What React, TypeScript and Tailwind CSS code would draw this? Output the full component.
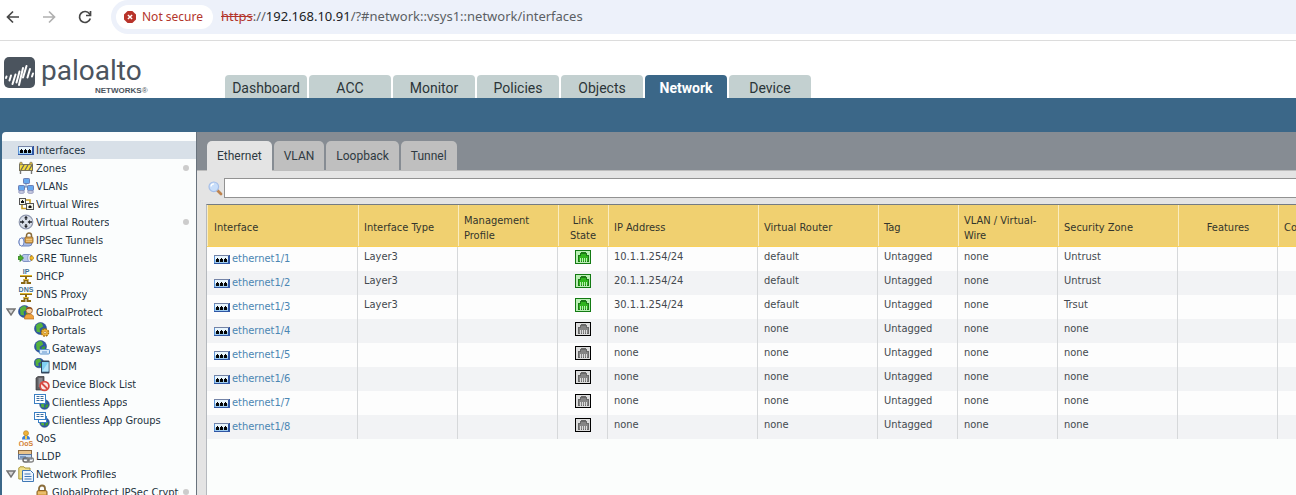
import type { ReactNode } from 'react';
import { clsx } from 'clsx';

const mainTabs = ['Dashboard', 'ACC', 'Monitor', 'Policies', 'Objects', 'Network', 'Device'];
const subTabs = ['Ethernet', 'VLAN', 'Loopback', 'Tunnel'];

interface IconProps {
  children: ReactNode;
  crisp?: boolean;
}

function Icon({ children, crisp }: IconProps) {
  return (
    <svg
      width="16"
      height="16"
      viewBox="0 0 16 16"
      className="shrink-0"
      shapeRendering={crisp ? 'crispEdges' : undefined}
      aria-hidden="true"
    >
      {children}
    </svg>
  );
}

function InterfaceIcon() {
  return (
    <Icon crisp>
      <rect x="0" y="4" width="16" height="9" fill="#2f55a3" />
      <rect x="0" y="4" width="15" height="1" fill="#7483a6" />
      <rect x="0" y="5" width="1" height="7" fill="#5c93d6" />
      <rect x="1" y="5" width="13" height="4" fill="#e8f5fd" />
      <rect x="1" y="9" width="13" height="3" fill="#9fcdf0" />
      <path d="M2 8h1V7h1v1h1v3H2zM6 8h1V7h1v1h1v3H6zM10 8h1V7h1v1h1v3h-3z" fill="#050505" />
    </Icon>
  );
}

function ZoneIcon() {
  return (
    <Icon>
      <path d="M2.5 3v11M13.5 3v11" stroke="#777" strokeWidth="1.4" />
      <rect x="1.5" y="4.5" width="13" height="6" fill="#f5dc3c" stroke="#77725c" />
      <path d="M3 10l3-5M7 10l3-5M11 10l3-5" stroke="#6f6b5c" strokeWidth="1.4" />
      <circle cx="3" cy="3.5" r="1.4" fill="#d8b63c" stroke="#777" strokeWidth=".6" />
      <circle cx="13" cy="3.5" r="1.4" fill="#d8b63c" stroke="#777" strokeWidth=".6" />
    </Icon>
  );
}

function VlanIcon() {
  return (
    <Icon>
      <path d="M8 6v3M3.5 11V9h9v2" stroke="#5d86b8" fill="none" />
      <rect x="5.5" y=".5" width="6" height="5" rx=".7" fill="#67a9ee" stroke="#6c7fb5" />
      <rect x=".5" y="7.5" width="6" height="5" rx=".7" fill="#67a9ee" stroke="#6c7fb5" />
      <rect x="9.5" y="7.5" width="6" height="5" rx=".7" fill="#67a9ee" stroke="#6c7fb5" />
      <ellipse cx="3.5" cy="14" rx="3" ry="1.5" fill="#c5c9df" stroke="#8b90b8" strokeWidth=".7" />
      <ellipse cx="12.5" cy="14" rx="3" ry="1.5" fill="#c5c9df" stroke="#8b90b8" strokeWidth=".7" />
    </Icon>
  );
}

function VirtualWireIcon() {
  return (
    <Icon>
      <path d="M4 9v3.5h5M8 4h4v3" fill="none" stroke="#c99d20" strokeWidth="1.6" />
      <rect x="1.5" y="2.5" width="6" height="6" fill="#f4f4e8" stroke="#555" />
      <rect x="8.5" y="7.5" width="7" height="6" fill="#f4f4e8" stroke="#555" />
      <path d="M3 5h1V4h1v1h1v2H3zM10.5 10h1V9h1v1h1v2h-3z" fill="#111" />
    </Icon>
  );
}

function RouterIcon() {
  return (
    <Icon>
      <circle cx="8" cy="8" r="6.8" fill="#d9dfe9" stroke="#8f98ae" strokeWidth="1.2" />
      <path
        d="M8 1.800L10 4.300H8.700V6H7.300V4.300H6zM8 14.200L6 11.700h1.300V10h1.400v1.700H10zM6.500 8L4 6v1.300H2v1.400h2V10zM9.500 8L12 6v1.300h2v1.400h-2V10z"
        fill="#22262d"
      />
    </Icon>
  );
}

function IpsecIcon() {
  return (
    <Icon>
      <rect x="1" y="6" width="13" height="8" rx="3" fill="#a9bde6" stroke="#6d83bd" />
      <ellipse cx="3.5" cy="10" rx="2.5" ry="4" fill="#f3f7ff" stroke="#7189c4" />
      <path d="M8.500 6V3.500a2.500 2.500 0 0 1 5 0V6" fill="none" stroke="#8a6d3b" strokeWidth="1.5" />
      <rect x="7" y="5" width="8" height="6" rx="1" fill="#d9a24c" stroke="#8a6127" strokeWidth=".8" />
      <path d="M8 7.500h6M8 9.300h6" stroke="#f5d18c" strokeWidth=".8" />
    </Icon>
  );
}

function GreIcon() {
  return (
    <Icon>
      <rect x="4" y="4.5" width="9" height="7" rx="2" fill="#b8c8ea" stroke="#8093c4" />
      <ellipse cx="11.5" cy="8" rx="1.8" ry="3.5" fill="#eef3ff" stroke="#7c8fc2" strokeWidth=".8" />
      <path d="M0 6.500h2V4.500L5.500 8 2 11.500v-2H0z" fill="#4fae2c" stroke="#26761a" strokeWidth=".7" />
      <path d="M12 6.500h1.500V5L16 8l-2.500 3V9.500H12z" fill="#f3bb27" stroke="#a87913" strokeWidth=".6" />
    </Icon>
  );
}

function LabelledNodeIcon({ label }: { label: string }) {
  return (
    <Icon>
      <text
        x="8"
        y="5.5"
        textAnchor="middle"
        fontSize="7"
        fontWeight="bold"
        fill="#3f6f94"
        fontFamily="Liberation Sans, sans-serif"
      >
        {label}
      </text>
      <path d="M2 8h12M8 8v3M3 15h3.500v-3h3v3H13" stroke="#8a6812" strokeWidth="2" fill="none" />
      <path d="M2 7.500h12M5.500 11.500h5" stroke="#e2b92e" strokeWidth="1" fill="none" />
    </Icon>
  );
}

function Globe({ cx = 6.5, cy = 6.5, r = 6 }: { cx?: number; cy?: number; r?: number }) {
  return (
    <g>
      <circle cx={cx} cy={cy} r={r} fill="#2e56a6" stroke="#274a86" strokeWidth=".6" />
      <path
        d={`M${cx - r * 0.75} ${cy - r * 0.5}q${r * 0.5} ${-r * 0.55} ${r} ${-r * 0.35}l${r * 0.2} ${r * 0.5}l${-r * 0.6} ${r * 0.4}l${r * 0.1} ${r * 0.6}l${-r * 0.6} ${-r * 0.1}z`}
        fill="#55b23c"
      />
      <path
        d={`M${cx + r * 0.2} ${cy + r * 0.1}l${r * 0.6} ${-r * 0.2}l${-r * 0.1} ${r * 0.6}l${-r * 0.5} ${r * 0.3}z`}
        fill="#3f9a34"
      />
    </g>
  );
}

function GlobalProtectIcon() {
  return (
    <Icon>
      <Globe cx={6.5} cy={7.5} r={6} />
      <path d="M6.500 15c0-4 2-5 4.500-5s5 1 5 5z" fill="#f0a13a" stroke="#b86a1c" strokeWidth=".7" />
      <circle cx="11.2" cy="6.5" r="3.2" fill="#f7cf9f" stroke="#9c5a22" strokeWidth=".8" />
      <path d="M8 6c0-4 6.500-4 6.500 0-1.500-1.500-4-1.800-6.500 0z" fill="#8d4c1d" />
    </Icon>
  );
}

function PortalIcon() {
  return (
    <Icon>
      <Globe />
      <circle cx="11" cy="10.5" r="3.6" fill="#f0b63c" stroke="#a86f10" strokeWidth="1.4" strokeDasharray="1.8 1" />
      <circle cx="11" cy="10.5" r="1.2" fill="#fff2c8" stroke="#a86f10" strokeWidth=".6" />
    </Icon>
  );
}

function GatewayIcon() {
  return (
    <Icon>
      <Globe />
      <rect x="5.5" y="9.5" width="10" height="4.5" rx="1" fill="#dcecfb" stroke="#5d92cb" />
      <path d="M8 12h5" stroke="#5d92cb" />
    </Icon>
  );
}

function MdmIcon() {
  return (
    <Icon>
      <Globe cx={5} cy={5} r={4.8} />
      <rect x="7" y="2.5" width="8.5" height="13" rx="1" fill="#32485f" />
      <rect x="8" y="4" width="6.5" height="9.5" fill="#7fd0f3" />
      <path d="M8 13.500L14.500 4v9.500z" fill="#b5e6fa" />
    </Icon>
  );
}

function BlockListIcon() {
  return (
    <Icon>
      <path d="M2 2l2-1.500h6V14H2z" fill="#5f5f62" stroke="#38383a" strokeWidth=".7" />
      <path d="M4.500 2h4v9h-4z" fill="#8b8b90" />
      <circle cx="10.5" cy="10" r="4.4" fill="#fbe9e7" stroke="#d84a42" strokeWidth="1.8" />
      <path d="M7.500 7l6 6" stroke="#d84a42" strokeWidth="1.8" />
    </Icon>
  );
}

function ClientlessIcon({ group }: { group?: boolean }) {
  return (
    <Icon>
      <Globe cx={10.5} cy={10.5} r={4.8} />
      {group && <rect x="4.5" y="4.5" width="8" height="6" fill="#fff" stroke="#3b80c4" />}
      <rect x=".5" y=".5" width="11" height={group ? 7 : 9} fill="#fff" stroke="#3b80c4" />
      <path d="M2.500 2.500h3M6.500 2.500h3M2.500 4.500h3M6.500 4.500h3" stroke="#3b6d9e" />
      {!group && <path d="M2.500 6.500h3M6.500 6.500h3" stroke="#3b6d9e" />}
    </Icon>
  );
}

function QosIcon() {
  return (
    <Icon>
      <path d="M4 9.500c0-3 1.500-4 4-4s4 1 4 4z" fill="#3f7fd6" />
      <circle cx="8" cy="3.2" r="2.5" fill="#efb33a" stroke="#b57a1a" strokeWidth=".6" />
      <path d="M7 6h2v3H7z" fill="#f5d04a" />
      <text
        x="8"
        y="15.5"
        textAnchor="middle"
        fontSize="7"
        fontWeight="bold"
        fill="#d38032"
        fontFamily="Liberation Sans, sans-serif"
      >
        QoS
      </text>
    </Icon>
  );
}

function LldpIcon() {
  return (
    <Icon>
      <rect x=".5" y="2.5" width="13" height="4" fill="#e9c38b" stroke="#8c6b42" />
      <rect x=".5" y="6.5" width="13" height="4.5" fill="#bcd3ee" stroke="#5c7395" />
      <path d="M2 9h6" stroke="#3b5f92" />
      <rect x="5" y="10" width="6" height="4" rx="2" fill="none" stroke="#6a6a6a" strokeWidth="1.4" />
      <rect x="9.5" y="10" width="6" height="4" rx="2" fill="none" stroke="#858585" strokeWidth="1.4" />
    </Icon>
  );
}

function ProfilesIcon() {
  return (
    <Icon>
      <path d="M.8 13V2L2 .8h4L7 2h5v11z" fill="#efe08b" stroke="#a8963b" />
      <path d="M4.500 4.500h8l3 3v8h-11z" fill="#eef5fd" stroke="#3f78b5" />
      <path d="M6.500 8h6M6.500 10.500h7M6.500 13h7" stroke="#3f78b5" />
    </Icon>
  );
}

function LockIcon() {
  return (
    <Icon>
      <path d="M5 8V4.500a3 3 0 0 1 6 0V8" fill="none" stroke="#8a6d3b" strokeWidth="1.8" />
      <rect x="3" y="6.5" width="10" height="8" rx="1.5" fill="#dca64b" stroke="#8a6127" />
      <path d="M4 9h8M4 11.500h8" stroke="#f7d791" />
    </Icon>
  );
}

function PortIcon({ up }: { up: boolean }) {
  const dark = up ? '#137a13' : '#000000';
  const light = up ? '#b9efb3' : '#dcdcdc';
  const fill = up ? '#2fb51d' : '#858585';
  const edge = up ? '#1c7a16' : '#696969';
  return (
    <svg
      width="16"
      height="14"
      viewBox="0 0 16 14"
      className="mx-auto block"
      shapeRendering="crispEdges"
      role="img"
      aria-label={up ? 'Link up' : 'Link down'}
    >
      <rect width="16" height="14" fill={dark} />
      <rect x="1" y="1" width="14" height="12" fill={light} />
      <path d="M3 12V5h2V3h1V2h5v1h1v2h2v7z" fill={edge} />
      <path d="M4 11V6h2V4h5v2h2v5z" fill={fill} />
      <path d="M5 8h1v4H5zM7 8h1v4H7zM9 8h1v4H9zM11 8h1v4h-1z" fill={light} />
    </svg>
  );
}

interface NavItem {
  label: string;
  icon: ReactNode;
  child?: boolean;
  open?: boolean;
  dot?: boolean;
}

const navItems: NavItem[] = [
  { label: 'Interfaces', icon: <InterfaceIcon /> },
  { label: 'Zones', icon: <ZoneIcon />, dot: true },
  { label: 'VLANs', icon: <VlanIcon /> },
  { label: 'Virtual Wires', icon: <VirtualWireIcon /> },
  { label: 'Virtual Routers', icon: <RouterIcon />, dot: true },
  { label: 'IPSec Tunnels', icon: <IpsecIcon /> },
  { label: 'GRE Tunnels', icon: <GreIcon /> },
  { label: 'DHCP', icon: <LabelledNodeIcon label="IP" /> },
  { label: 'DNS Proxy', icon: <LabelledNodeIcon label="DNS" /> },
  { label: 'GlobalProtect', icon: <GlobalProtectIcon />, open: true },
  { label: 'Portals', icon: <PortalIcon />, child: true },
  { label: 'Gateways', icon: <GatewayIcon />, child: true },
  { label: 'MDM', icon: <MdmIcon />, child: true },
  { label: 'Device Block List', icon: <BlockListIcon />, child: true },
  { label: 'Clientless Apps', icon: <ClientlessIcon />, child: true },
  { label: 'Clientless App Groups', icon: <ClientlessIcon group />, child: true },
  { label: 'QoS', icon: <QosIcon /> },
  { label: 'LLDP', icon: <LldpIcon /> },
  { label: 'Network Profiles', icon: <ProfilesIcon />, open: true },
  { label: 'GlobalProtect IPSec Crypto', icon: <LockIcon />, child: true, dot: true },
];

const columns = [
  { label: 'Interface', width: 'w-[151px]' },
  { label: 'Interface Type', width: 'w-[100px]' },
  { label: 'Management Profile', width: 'w-[100px]' },
  { label: 'Link State', width: 'w-[50px]', center: true },
  { label: 'IP Address', width: 'w-[150px]' },
  { label: 'Virtual Router', width: 'w-[120px]' },
  { label: 'Tag', width: 'w-[80px]' },
  { label: 'VLAN / Virtual-Wire', width: 'w-[100px]' },
  { label: 'Security Zone', width: 'w-[120px]' },
  { label: 'Features', width: 'w-[100px]', center: true },
  { label: 'Comment', width: 'w-[200px]' },
];

const interfaces = [
  { name: 'ethernet1/1', type: 'Layer3', up: true, ip: '10.1.1.254/24', router: 'default', zone: 'Untrust' },
  { name: 'ethernet1/2', type: 'Layer3', up: true, ip: '20.1.1.254/24', router: 'default', zone: 'Untrust' },
  { name: 'ethernet1/3', type: 'Layer3', up: true, ip: '30.1.1.254/24', router: 'default', zone: 'Trsut' },
  { name: 'ethernet1/4', type: '', up: false, ip: 'none', router: 'none', zone: 'none' },
  { name: 'ethernet1/5', type: '', up: false, ip: 'none', router: 'none', zone: 'none' },
  { name: 'ethernet1/6', type: '', up: false, ip: 'none', router: 'none', zone: 'none' },
  { name: 'ethernet1/7', type: '', up: false, ip: 'none', router: 'none', zone: 'none' },
  { name: 'ethernet1/8', type: '', up: false, ip: 'none', router: 'none', zone: 'none' },
];

function BrowserBar() {
  return (
    <div className="flex h-[41px] shrink-0 items-start border-b border-[#dcdcdc] bg-white font-['Noto_Sans',sans-serif]">
      <div className="flex h-[34px] w-[111px] shrink-0 items-center gap-5 pl-[5px]">
        <button aria-label="Back" className="text-[#474747]">
          <svg width="16" height="16" viewBox="0 0 16 16" fill="none" stroke="currentColor" strokeWidth="1.7">
            <path d="M14 8H3M8 2.500L2.500 8 8 13.500" />
          </svg>
        </button>
        <button aria-label="Forward" className="text-[#b0b0b0]">
          <svg width="16" height="16" viewBox="0 0 16 16" fill="none" stroke="currentColor" strokeWidth="1.7">
            <path d="M2 8h11M8 2.500L13.500 8 8 13.500" />
          </svg>
        </button>
        <button aria-label="Reload" className="text-[#474747]">
          <svg width="16" height="16" viewBox="0 0 16 16" fill="none" stroke="currentColor" strokeWidth="1.7">
            <path d="M13.300 9.500A5.500 5.500 0 1 1 12.500 4.800L13.500 6" />
            <path d="M13.500 2v4.500H9" />
          </svg>
        </button>
      </div>
      <div className="flex h-[34px] min-w-0 flex-1 items-center gap-2 rounded-l-full bg-[#edf1fa] pl-[5px]">
        <button className="flex h-6 items-center gap-1.5 rounded-full bg-white pr-2.5 pl-2 text-[12px] text-[#b3352b]">
          <svg width="12" height="12" viewBox="0 0 12 12" aria-hidden="true">
            <path d="M3.600 0h4.800L12 3.600v4.800L8.400 12H3.600L0 8.400V3.600z" fill="#b8332a" />
            <path d="M3.900 3.900l4.200 4.200M8.100 3.900L3.900 8.100" stroke="#fff" strokeWidth="1.4" />
          </svg>
          Not secure
        </button>
        <div className="truncate text-[13px] text-[#5b5f64]">
          <span className="text-[#b3352b] line-through">https</span>://
          <span className="text-[#202124]">192.168.10.91</span>/?#network::vsys1::network/interfaces
        </div>
      </div>
    </div>
  );
}

function Logo() {
  return (
    <div className="flex w-[225px] shrink-0 items-start gap-1.5 pt-3.5 pl-1">
      <svg width="31" height="31" viewBox="0 0 31 31" className="mt-0.5 shrink-0" aria-hidden="true">
        <rect width="31" height="31" rx="5" fill="#4b545e" />
        <path
          d="M2.500 19.500L2 21M7 18.500L5.500 23.500M11.500 17.500L8.500 27M15.500 14.500L12.500 25.500M19 11L15 28M22.500 9L19 20.500M26 12L23.500 20.500M29 16.500L28 19.500"
          stroke="#fff"
          strokeWidth="2"
          strokeLinecap="round"
        />
      </svg>
      <div className="text-[#4b545e]">
        <div className="font-[Roboto,sans-serif] text-[28px] leading-8">paloalto</div>
        <div className="pl-[54px] font-['Liberation_Sans',sans-serif] text-[8px] leading-2 font-bold">
          NETWORKS<span className="font-normal">®</span>
        </div>
      </div>
    </div>
  );
}

function Header() {
  return (
    <header className="flex h-[57px] shrink-0 bg-white">
      <Logo />
      <nav className="flex items-end gap-0.5 font-[Roboto,sans-serif]">
        {mainTabs.map((tab) => (
          <button
            key={tab}
            className={clsx(
              'h-[23px] w-[82px] rounded-t-[4px] pt-0.5 text-[14px] leading-5',
              tab === 'Network' ? 'bg-[#3b6788] font-bold text-white' : 'bg-[#c3d0d0] text-[#2b3538]',
            )}
          >
            {tab}
          </button>
        ))}
      </nav>
    </header>
  );
}

function Sidebar() {
  return (
    <aside className="w-[194px] shrink-0 overflow-hidden rounded-tl-[4px] bg-[#fbfdfd]">
      <ul className="pt-[9px]">
        {navItems.map((item, i) => (
          <li key={item.label} className={clsx('flex h-[18px] items-center pr-[7px]', i === 0 && 'bg-[#d8e0e8]')}>
            <span className="flex w-4 shrink-0 pl-1">
              {item.open && (
                <button aria-label={`Collapse ${item.label}`}>
                  <svg width="10" height="8" viewBox="0 0 10 8" aria-hidden="true">
                    <path d="M1 1h8L5 7z" fill="#d4d4d4" stroke="#747474" strokeWidth="1.4" />
                  </svg>
                </button>
              )}
            </span>
            <a
              href="#network"
              className={clsx('mr-1 flex min-w-0 items-center gap-0.5 text-[#24333f]', item.child && 'pl-4')}
            >
              {item.icon}
              <span className="overflow-hidden pt-0.5 leading-4 whitespace-nowrap">{item.label}</span>
            </a>
            {item.dot && <span className="ml-auto size-1.5 shrink-0 rounded-full bg-[#cccccc]" />}
          </li>
        ))}
      </ul>
    </aside>
  );
}

function InterfaceTable() {
  return (
    <table className="w-[1271px] table-fixed border-separate border-spacing-0 text-left">
      <thead>
        <tr className="h-[42px] bg-[#f0d070] text-[#33352c]">
          {columns.map((col) => (
            <th
              key={col.label}
              className={clsx(
                'border-b border-[#fad15a] px-1.5 pt-1 leading-[15px] font-normal shadow-[inset_1px_0_0_#faecc0] first:pl-[7px]',
                col.width,
                col.center && 'text-center',
              )}
            >
              {col.label}
            </th>
          ))}
        </tr>
      </thead>
      <tbody className="text-[#44494f]">
        {interfaces.map((row) => (
          <tr
            key={row.name}
            className="h-6 bg-[#fdfdfd] leading-4 *:px-1.5 *:pb-1 *:shadow-[inset_-1px_0_0_#d6d8da] *:first:pl-[7px] even:bg-[#f2f3f5]"
          >
            <td>
              <a href="#interface" className="flex h-5 items-end gap-0.5 text-[#4b86b3]">
                <InterfaceIcon />
                {row.name}
              </a>
            </td>
            <td>{row.type}</td>
            <td />
            <td>
              <PortIcon up={row.up} />
            </td>
            <td>{row.ip}</td>
            <td>{row.router}</td>
            <td>Untagged</td>
            <td>none</td>
            <td>{row.zone}</td>
            <td />
            <td />
          </tr>
        ))}
      </tbody>
    </table>
  );
}

function Content() {
  return (
    <main className="flex min-w-0 flex-1 flex-col border-l border-[#69737d] bg-[#e4e4e4]">
      <div className="flex h-[39px] shrink-0 items-end gap-0.5 border-b border-[#bdbdbd] bg-[#868c93] pl-2.5 font-[Roboto,sans-serif]">
        {subTabs.map((tab) => (
          <button
            key={tab}
            className={clsx(
              'rounded-t-[5px] px-2.5 text-[12px] text-[#2f3a42]',
              tab === 'Ethernet' ? '-mb-px h-[30px] bg-[#e4e4e4]' : 'h-[29px] bg-[#bfbfbf]',
            )}
          >
            {tab}
          </button>
        ))}
      </div>
      <div className="flex shrink-0 items-center gap-px pt-[7px] pb-1.5 pl-[11px]">
        <svg width="15" height="15" viewBox="0 0 15 15" className="shrink-0" aria-hidden="true">
          <path d="M9 9l4 4" stroke="#bd8450" strokeWidth="2.8" strokeLinecap="round" />
          <circle cx="5.8" cy="5.8" r="4.8" fill="#c8defa" stroke="#a6bfe8" strokeWidth="1.2" />
          <path d="M3 5.500a3 3 0 0 1 3-2.700" stroke="#fff" strokeWidth="1.3" fill="none" />
        </svg>
        <input
          type="text"
          aria-label="Search interfaces"
          className="h-5 min-w-0 flex-1 border border-r-0 border-[#929292] bg-white px-1 outline-none"
        />
      </div>
      <div className="ml-[9px] min-h-0 flex-1 overflow-hidden border-t border-l border-t-[#747b83] border-l-[#b5b9be] bg-[#fbfdfc]">
        <InterfaceTable />
      </div>
    </main>
  );
}

export default function App() {
  return (
    <div className="flex h-screen flex-col overflow-hidden bg-[#3b6788] font-['DejaVu_Sans_Condensed','DejaVu_Sans',sans-serif] text-[11px]">
      <BrowserBar />
      <Header />
      <div className="flex min-h-0 flex-1 pt-[34px] pl-0.5">
        <Sidebar />
        <Content />
      </div>
    </div>
  );
}
